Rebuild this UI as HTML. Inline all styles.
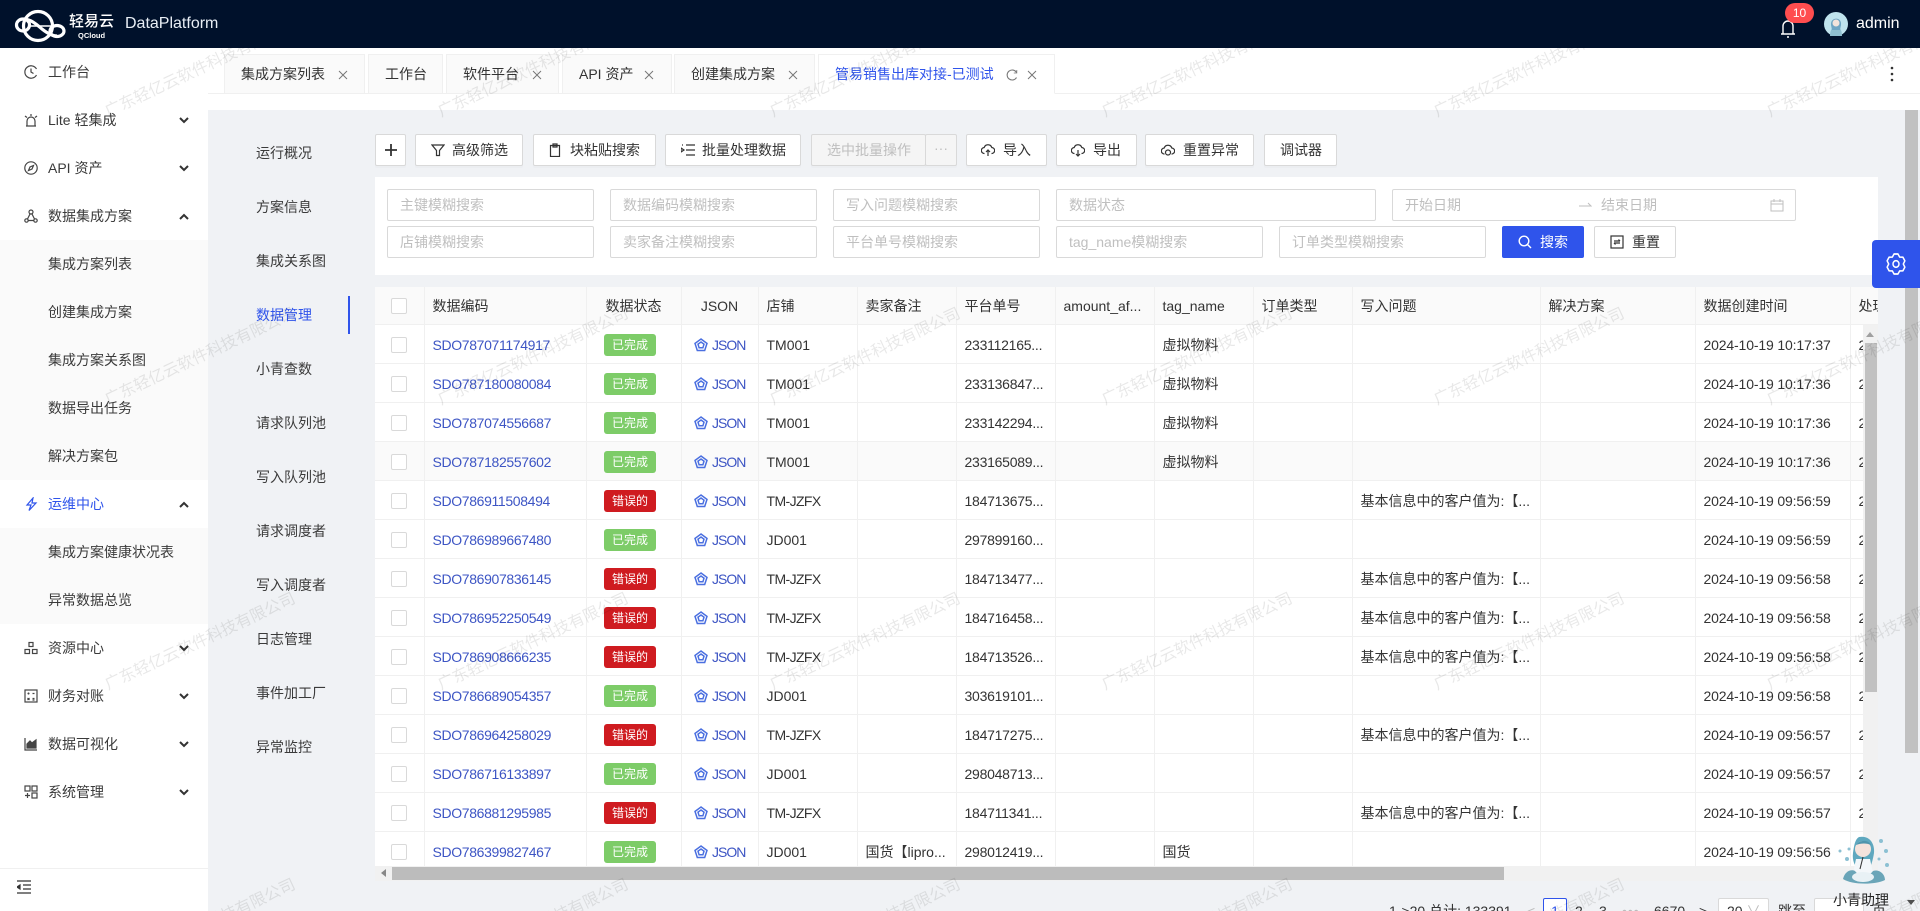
<!DOCTYPE html>
<html lang="zh-CN"><head><meta charset="utf-8"><title>DataPlatform</title>
<style>
*{box-sizing:border-box}
html,body{margin:0;padding:0;width:1920px;height:911px;overflow:hidden;background:#f0f2f5;font-family:"Liberation Sans","Noto Sans CJK SC",sans-serif;font-size:14px;color:#333}
body{position:relative}
#root{position:absolute;left:0;top:0;width:1920px;height:911px;overflow:hidden;background:#f0f2f5}
.a{position:absolute;white-space:nowrap}
#hd{position:absolute;left:0;top:0;width:1920px;height:48px;background:#00112b;z-index:5;color:#fff}
#sd{position:absolute;left:0;top:48px;width:208px;height:863px;background:#fff}
.m{position:absolute;left:48px;height:20px;line-height:20px;white-space:nowrap;color:#3a3a3a}
.sub{position:absolute;left:0;width:208px;background:#fafafa}
.ic{position:absolute;left:24px;width:14px;height:14px;fill:none;stroke:#444;stroke-width:1.2}
.ch{position:absolute;left:179px;width:10px;height:8px;fill:none;stroke:#333;stroke-width:2}
#tb{position:absolute;left:208px;top:48px;width:1712px;height:62px;background:#fff}
.tab{position:absolute;top:54px;height:40px;background:#fafafa;border:1px solid #f0f0f0;line-height:38px;padding-left:16px;white-space:nowrap}
.x{position:absolute;top:70px;width:10px;height:10px;stroke:#777;stroke-width:1;fill:none}
.n{position:absolute;left:256px;height:20px;line-height:20px;white-space:nowrap;color:#3a3a3a}
.b{position:absolute;top:134px;height:32px;background:#fff;border:1px solid #d9d9d9;border-radius:2px;line-height:30px;white-space:nowrap;box-shadow:0 2px 0 rgba(0,0,0,.015);color:#333}
.b svg,.r svg{position:absolute;top:8px;width:14px;height:14px;fill:none;stroke:#333;stroke-width:1.2}
.i{position:absolute;height:32px;background:#fff;border:1px solid #d9d9d9;border-radius:2px;line-height:30px;padding-left:12px;color:#bfbfbf;white-space:nowrap}
#tw{position:absolute;left:375px;top:287px;width:1503px;height:579px;overflow:hidden;background:#fff}
table{border-collapse:separate;border-spacing:0;table-layout:fixed;width:1675.5px}
th,td{border-right:1px solid #f0f0f0;border-bottom:1px solid #f0f0f0;padding:0 8px;white-space:nowrap;overflow:hidden;text-align:left;font-weight:400}
th{height:38px;background:#fafafa;color:#333}
td{height:39px;padding-top:1px}
.c{display:block;width:16px;height:16px;border:1px solid #d9d9d9;border-radius:2px;background:#fff;margin:0 auto}
.l{color:#3d55c4;letter-spacing:-.35px}
.t{display:inline-block;width:52px;height:22px;line-height:22px;text-align:center;color:#fff;font-size:12px;border-radius:3px;margin-left:9.5px;vertical-align:middle}
.g{background:#7dcc68}.e{background:#cf1b20}
.j{color:#3d55c4;display:inline-block;margin-left:4.5px}
.j svg{width:14px;height:14px;vertical-align:-2px;margin-right:4px}
.j span{letter-spacing:-1px}
.d{letter-spacing:-.15px}
.p{letter-spacing:-.25px}
.k{letter-spacing:-.6px}
.hv td{background:#fafafa}
#wm{position:absolute;left:0;top:48px;z-index:3;pointer-events:none;overflow:hidden}
#wm text{font-family:"Liberation Sans","Noto Sans CJK SC",sans-serif;font-size:16px;fill:rgba(0,0,0,.09)}
.pg{position:absolute;top:899px;height:12px;overflow:hidden;line-height:24px;white-space:nowrap;color:#333}
</style></head><body><div id="root">

<div id="hd">
<svg class="a" style="left:0;top:0" width="80" height="48" viewBox="0 0 80 48" fill="none" stroke="#fff" stroke-width="3.2"><circle cx="38" cy="26" r="14.500"/><ellipse cx="23" cy="25" rx="6.500" ry="6"/><ellipse cx="57" cy="31" rx="7" ry="5.500"/><path d="M24 19c8 1 12 5 18 10 5 4 10 7 15 7"/><path d="M29 26h22" stroke-width="1.400"/></svg>
<div class="a" style="left:69px;top:12px;font-size:15px;line-height:20px;font-weight:500">轻易云</div>
<div class="a" style="left:78px;top:31px;font-size:7.5px;line-height:10px;font-weight:700">QCloud</div>
<div class="a" style="left:125px;top:14px;font-size:16px;line-height:20px;color:#e8eef5">DataPlatform</div>
<svg class="a" style="left:1780px;top:16px" width="16" height="24" viewBox="0 0 16 24" fill="none" stroke="#fff" stroke-width="1.400"><path d="M3 18V10a5 5 0 0 1 10 0v8M1 18h14M7 21h2"/></svg>
<div class="a" style="left:1785px;top:3px;width:29px;height:20px;border-radius:10px;background:#ff4d4f;color:#fff;font-size:12px;line-height:20px;text-align:center">10</div>
<svg class="a" style="left:1824px;top:12px" width="24" height="24" viewBox="0 0 24 24"><circle cx="12" cy="12" r="12" fill="#bfe3ee"/><path d="M6 24c0-6 2-9 6-9s6 3 6 9z" fill="#8fbfd0"/><path d="M7 13c-1-8 11-9 10 0l-1 5H8z" fill="#6fa5c4"/><circle cx="12" cy="11" r="3.500" fill="#f3e3dc"/></svg>
<div class="a" style="left:1856px;top:14px;font-size:16px;line-height:20px;color:#fff">admin</div>
</div>

<div id="sd"></div>
<div class="sub" style="top:240px;height:240px"></div>
<div class="sub" style="top:528px;height:96px"></div>
<div class="a" style="left:0;top:868px;width:208px;height:1px;background:#f0f0f0"></div>
<div class="m" style="top:62px">工作台</div>
<div class="m" style="top:110px">Lite 轻集成</div>
<div class="m" style="top:158px">API 资产</div>
<div class="m" style="top:206px">数据集成方案</div>
<div class="m" style="top:254px">集成方案列表</div>
<div class="m" style="top:302px">创建集成方案</div>
<div class="m" style="top:350px">集成方案关系图</div>
<div class="m" style="top:398px">数据导出任务</div>
<div class="m" style="top:446px">解决方案包</div>
<div class="m" style="top:494px;color:#2f54eb">运维中心</div>
<div class="m" style="top:542px">集成方案健康状况表</div>
<div class="m" style="top:590px">异常数据总览</div>
<div class="m" style="top:638px">资源中心</div>
<div class="m" style="top:686px">财务对账</div>
<div class="m" style="top:734px">数据可视化</div>
<div class="m" style="top:782px">系统管理</div>
<svg class="ic" style="top:65px" viewBox="0 0 14 14"><path d="M12.500 4A6.200 6.200 0 1 0 12.500 10M7 3.500V7l2.500 1.500"/></svg>
<svg class="ic" style="top:113px" viewBox="0 0 14 14"><path d="M2 13h10M3 13V8a4 4 0 0 1 8 0v5M7 1v2M1 3l2 1.500M13 3l-2 1.500"/></svg>
<svg class="ic" style="top:161px" viewBox="0 0 14 14"><circle cx="7" cy="7" r="6.200"/><path d="M9.500 4.500 8 8 4.500 9.500 6 6z"/></svg>
<svg class="ic" style="top:209px" viewBox="0 0 14 14"><circle cx="7" cy="3" r="2"/><circle cx="2.500" cy="11.500" r="1.700"/><circle cx="11.500" cy="11.500" r="1.700"/><path d="M6 5 3.500 10M8 5l2.500 5M4.200 11.500h5.600"/></svg>
<svg class="ic" style="top:497px;stroke:#2f54eb" viewBox="0 0 14 14"><path d="M9 1 3 8h4l-2 5.500L12 6H8z"/></svg>
<svg class="ic" style="top:641px" viewBox="0 0 14 14"><rect x="5" y="1.500" width="4" height="4"/><rect x="1" y="8.500" width="4.500" height="4"/><rect x="8.500" y="8.500" width="4.500" height="4"/></svg>
<svg class="ic" style="top:689px" viewBox="0 0 14 14"><rect x="1" y="1" width="12" height="12"/><path d="M3.500 4.500h2M4.500 3.500v2M8.500 4.500h2M3.500 9l2 2M5.500 9l-2 2M8.500 9.500h2M8.500 11h2"/></svg>
<svg class="ic" style="top:737px" viewBox="0 0 14 14"><path d="M1 1v12h12"/><path d="M3 11V7l3-3 2 2 4-3v8z" fill="#444"/></svg>
<svg class="ic" style="top:785px" viewBox="0 0 14 14"><rect x="1" y="1" width="5" height="5"/><rect x="8" y="1" width="5" height="5"/><rect x="8" y="8" width="5" height="5"/><path d="M1 10.500h5M3.500 8v5"/></svg>
<svg class="ch" style="top:116px" viewBox="0 0 10 8"><path d="M1 2l4 4 4-4"/></svg>
<svg class="ch" style="top:164px" viewBox="0 0 10 8"><path d="M1 2l4 4 4-4"/></svg>
<svg class="ch" style="top:213px" viewBox="0 0 10 8"><path d="M1 6l4-4 4 4"/></svg>
<svg class="ch" style="top:501px" viewBox="0 0 10 8"><path d="M1 6l4-4 4 4"/></svg>
<svg class="ch" style="top:644px" viewBox="0 0 10 8"><path d="M1 2l4 4 4-4"/></svg>
<svg class="ch" style="top:692px" viewBox="0 0 10 8"><path d="M1 2l4 4 4-4"/></svg>
<svg class="ch" style="top:740px" viewBox="0 0 10 8"><path d="M1 2l4 4 4-4"/></svg>
<svg class="ch" style="top:788px" viewBox="0 0 10 8"><path d="M1 2l4 4 4-4"/></svg>
<svg class="a" style="left:17px;top:880px" width="14" height="14" viewBox="0 0 14 14" fill="none" stroke="#333" stroke-width="1.200"><path d="M0 1h14M6 5h8M6 9h8M0 13h14"/><path d="M0 7l3-2v4z" fill="#333"/></svg>

<div id="tb"></div>
<div class="a" style="left:208px;top:93px;width:1712px;height:1px;background:#f0f0f0"></div>
<div class="tab" style="left:224px;width:141px">集成方案列表</div>
<div class="tab" style="left:368px;width:75px">工作台</div>
<div class="tab" style="left:446px;width:113px">软件平台</div>
<div class="tab" style="left:562px;width:110px">API 资产</div>
<div class="tab" style="left:674px;width:141px">创建集成方案</div>
<div class="tab" style="left:818px;width:237px;background:#fff;border-bottom-color:#fff;color:#2f54eb">管易销售出库对接-已测试</div>
<svg class="x" style="left:338px" viewBox="0 0 10 10"><path d="M1 1l8 8M9 1l-8 8"/></svg>
<svg class="x" style="left:532px" viewBox="0 0 10 10"><path d="M1 1l8 8M9 1l-8 8"/></svg>
<svg class="x" style="left:644px" viewBox="0 0 10 10"><path d="M1 1l8 8M9 1l-8 8"/></svg>
<svg class="x" style="left:788px" viewBox="0 0 10 10"><path d="M1 1l8 8M9 1l-8 8"/></svg>
<svg class="x" style="left:1027px" viewBox="0 0 10 10"><path d="M1 1l8 8M9 1l-8 8"/></svg>
<svg class="a" style="left:1006px;top:69px" width="12" height="12" viewBox="0 0 12 12" fill="none" stroke="#777" stroke-width="1.100"><path d="M10.500 3.500A5 5 0 1 0 10.500 8.500"/><path d="M10.800 1v3h-3" stroke-width=".8"/></svg>
<svg class="a" style="left:1890px;top:66px" width="4" height="16" viewBox="0 0 4 16" fill="#333"><circle cx="2" cy="2" r="1.300"/><circle cx="2" cy="8" r="1.300"/><circle cx="2" cy="14" r="1.300"/></svg>

<div class="n" style="top:143px">运行概况</div>
<div class="n" style="top:197px">方案信息</div>
<div class="n" style="top:251px">集成关系图</div>
<div class="n" style="top:305px;color:#2f54eb">数据管理</div>
<div class="n" style="top:359px">小青查数</div>
<div class="n" style="top:413px">请求队列池</div>
<div class="n" style="top:467px">写入队列池</div>
<div class="n" style="top:521px">请求调度者</div>
<div class="n" style="top:575px">写入调度者</div>
<div class="n" style="top:629px">日志管理</div>
<div class="n" style="top:683px">事件加工厂</div>
<div class="n" style="top:737px">异常监控</div>
<div class="a" style="left:348px;top:296px;width:2px;height:38px;background:#2f54eb"></div>

<div class="b" style="left:375px;width:31px"><svg style="left:8px;top:8px;stroke-width:1.800" viewBox="0 0 14 14"><path d="M7 1v12M1 7h12"/></svg></div>
<div class="b" style="left:415px;width:108px;padding-left:36px"><svg style="left:15px" viewBox="0 0 14 14"><path d="M1 2h12L8.500 7.500V12.500H5.500V7.500z"/></svg>高级筛选</div>
<div class="b" style="left:533px;width:123px;padding-left:36px"><svg style="left:14px" viewBox="0 0 14 14"><path d="M2.500 2.500h9v11h-9zM5 1h4v3H5z"/></svg>块粘贴搜索</div>
<div class="b" style="left:665px;width:136px;padding-left:36px"><svg style="left:15px" viewBox="0 0 14 14"><path d="M5 2h9M5 7h9M5 12h9M1 2h1M0 5l3 2-3 2z"/></svg>批量处理数据</div>
<div class="b" style="left:811px;width:115px;padding-left:15px;background:#f5f5f5;color:#bfbfbf">选中批量操作</div>
<div class="b" style="left:925px;width:32px;background:#f5f5f5;color:#bfbfbf;text-align:center;line-height:26px">···</div>
<div class="b" style="left:966px;width:81px;padding-left:36px"><svg style="left:14px" viewBox="0 0 14 14"><path d="M3.500 10.500a3 3 0 0 1-.3-6 4 4 0 0 1 7.600 0 3 3 0 0 1-.3 6M7 13V7M5 9l2-2 2 2"/></svg>导入</div>
<div class="b" style="left:1056px;width:81px;padding-left:36px"><svg style="left:14px" viewBox="0 0 14 14"><path d="M3.500 10.500a3 3 0 0 1-.3-6 4 4 0 0 1 7.600 0 3 3 0 0 1-.3 6M7 13V7M5 11l2 2 2-2"/></svg>导出</div>
<div class="b" style="left:1145px;width:109px;padding-left:37px"><svg style="left:15px" viewBox="0 0 14 14"><path d="M3.500 11a3 3 0 0 1-.3-6 4 4 0 0 1 7.600 0 3 3 0 0 1-.3 6"/><circle cx="7" cy="9.500" r="2.500"/></svg>重置异常</div>
<div class="b" style="left:1264px;width:73px;padding-left:15px">调试器</div>

<div class="a" style="left:375px;top:177px;width:1503px;height:98px;background:#fff"></div>
<div class="i" style="left:387px;top:189px;width:207px">主键模糊搜索</div>
<div class="i" style="left:610px;top:189px;width:207px">数据编码模糊搜索</div>
<div class="i" style="left:833px;top:189px;width:207px">写入问题模糊搜索</div>
<div class="i" style="left:1056px;top:189px;width:320px">数据状态</div>
<div class="i" style="left:1392px;top:189px;width:404px">开始日期</div>
<svg class="a" style="left:1578px;top:200px" width="14" height="10" viewBox="0 0 14 10" fill="none" stroke="#bfbfbf"><path d="M1 6h12l-3-3"/></svg>
<div class="a" style="left:1601px;top:195px;line-height:20px;color:#bfbfbf">结束日期</div>
<svg class="a" style="left:1770px;top:198px" width="14" height="14" viewBox="0 0 14 14" fill="none" stroke="#bfbfbf"><path d="M1 3h12v10H1zM1 6h12M4 1v3M10 1v3"/></svg>
<div class="i" style="left:387px;top:226px;width:207px">店铺模糊搜索</div>
<div class="i" style="left:610px;top:226px;width:207px">卖家备注模糊搜索</div>
<div class="i" style="left:833px;top:226px;width:207px">平台单号模糊搜索</div>
<div class="i" style="left:1056px;top:226px;width:207px">tag_name模糊搜索</div>
<div class="i" style="left:1279px;top:226px;width:207px">订单类型模糊搜索</div>
<div class="a r" style="left:1502px;top:226px;width:82px;height:32px;background:#2f54eb;border-radius:2px;color:#fff;line-height:32px;padding-left:38px"><svg style="left:16px;top:9px;stroke:#fff;stroke-width:1.400" viewBox="0 0 14 14"><circle cx="6" cy="6" r="4.800"/><path d="M9.500 9.500 13 13"/></svg>搜索</div>
<div class="a r" style="left:1594px;top:226px;width:82px;height:32px;background:#fff;border:1px solid #d9d9d9;border-radius:2px;line-height:30px;padding-left:37px"><svg style="left:15px;top:8px" viewBox="0 0 14 14"><rect x="1" y="1" width="12" height="12"/><path d="M4 6h6M10 8H4M8.500 4.500 10 6M5.500 9.500 4 8"/></svg>重置</div>

<div id="tw"><table>
<colgroup><col style="width:49.5px"><col style="width:162px"><col style="width:95px"><col style="width:77px"><col style="width:99px"><col style="width:99px"><col style="width:99px"><col style="width:99px"><col style="width:99px"><col style="width:99px"><col style="width:188px"><col style="width:155px"><col style="width:155px"><col style="width:200px"></colgroup>
<tr><th><span class="c"></span></th><th>数据编码</th><th style="text-align:center">数据状态</th><th style="text-align:center">JSON</th><th>店铺</th><th>卖家备注</th><th>平台单号</th><th>amount_af...</th><th>tag_name</th><th>订单类型</th><th>写入问题</th><th>解决方案</th><th>数据创建时间</th><th>处理时间</th></tr>
<tr><td><span class="c"></span></td><td class="l">SDO787071174917</td><td><span class="t g">已完成</span></td><td><span class="j"><svg viewBox="0 0 14 14" fill="none" stroke="#4a6fe0" stroke-width="1.500"><path d="M7 1l6 4.400-2.300 7.100H3.300L1 5.400z"/><path d="M7 4l3 2.200-1.100 3.600H5.100L4 6.200z"/></svg><span>JSON</span></span></td><td>TM001</td><td></td><td class="p">233112165...</td><td></td><td>虚拟物料</td><td></td><td></td><td></td><td class="d">2024-10-19 10:17:37</td><td class="d">2024-10-19 10:17:38</td></tr>
<tr><td><span class="c"></span></td><td class="l">SDO787180080084</td><td><span class="t g">已完成</span></td><td><span class="j"><svg viewBox="0 0 14 14" fill="none" stroke="#4a6fe0" stroke-width="1.500"><path d="M7 1l6 4.400-2.300 7.100H3.300L1 5.400z"/><path d="M7 4l3 2.200-1.100 3.600H5.100L4 6.200z"/></svg><span>JSON</span></span></td><td>TM001</td><td></td><td class="p">233136847...</td><td></td><td>虚拟物料</td><td></td><td></td><td></td><td class="d">2024-10-19 10:17:36</td><td class="d">2024-10-19 10:17:38</td></tr>
<tr><td><span class="c"></span></td><td class="l">SDO787074556687</td><td><span class="t g">已完成</span></td><td><span class="j"><svg viewBox="0 0 14 14" fill="none" stroke="#4a6fe0" stroke-width="1.500"><path d="M7 1l6 4.400-2.300 7.100H3.300L1 5.400z"/><path d="M7 4l3 2.200-1.100 3.600H5.100L4 6.200z"/></svg><span>JSON</span></span></td><td>TM001</td><td></td><td class="p">233142294...</td><td></td><td>虚拟物料</td><td></td><td></td><td></td><td class="d">2024-10-19 10:17:36</td><td class="d">2024-10-19 10:17:38</td></tr>
<tr class="hv"><td><span class="c"></span></td><td class="l">SDO787182557602</td><td><span class="t g">已完成</span></td><td><span class="j"><svg viewBox="0 0 14 14" fill="none" stroke="#4a6fe0" stroke-width="1.500"><path d="M7 1l6 4.400-2.300 7.100H3.300L1 5.400z"/><path d="M7 4l3 2.200-1.100 3.600H5.100L4 6.200z"/></svg><span>JSON</span></span></td><td>TM001</td><td></td><td class="p">233165089...</td><td></td><td>虚拟物料</td><td></td><td></td><td></td><td class="d">2024-10-19 10:17:36</td><td class="d">2024-10-19 10:17:38</td></tr>
<tr><td><span class="c"></span></td><td class="l">SDO786911508494</td><td><span class="t e">错误的</span></td><td><span class="j"><svg viewBox="0 0 14 14" fill="none" stroke="#4a6fe0" stroke-width="1.500"><path d="M7 1l6 4.400-2.300 7.100H3.300L1 5.400z"/><path d="M7 4l3 2.200-1.100 3.600H5.100L4 6.200z"/></svg><span>JSON</span></span></td><td class="k">TM-JZFX</td><td></td><td class="p">184713675...</td><td></td><td></td><td></td><td>基本信息中的客户值为:【...</td><td></td><td class="d">2024-10-19 09:56:59</td><td class="d">2024-10-19 09:57:00</td></tr>
<tr><td><span class="c"></span></td><td class="l">SDO786989667480</td><td><span class="t g">已完成</span></td><td><span class="j"><svg viewBox="0 0 14 14" fill="none" stroke="#4a6fe0" stroke-width="1.500"><path d="M7 1l6 4.400-2.300 7.100H3.300L1 5.400z"/><path d="M7 4l3 2.200-1.100 3.600H5.100L4 6.200z"/></svg><span>JSON</span></span></td><td>JD001</td><td></td><td class="p">297899160...</td><td></td><td></td><td></td><td></td><td></td><td class="d">2024-10-19 09:56:59</td><td class="d">2024-10-19 09:57:00</td></tr>
<tr><td><span class="c"></span></td><td class="l">SDO786907836145</td><td><span class="t e">错误的</span></td><td><span class="j"><svg viewBox="0 0 14 14" fill="none" stroke="#4a6fe0" stroke-width="1.500"><path d="M7 1l6 4.400-2.300 7.100H3.300L1 5.400z"/><path d="M7 4l3 2.200-1.100 3.600H5.100L4 6.200z"/></svg><span>JSON</span></span></td><td class="k">TM-JZFX</td><td></td><td class="p">184713477...</td><td></td><td></td><td></td><td>基本信息中的客户值为:【...</td><td></td><td class="d">2024-10-19 09:56:58</td><td class="d">2024-10-19 09:57:00</td></tr>
<tr><td><span class="c"></span></td><td class="l">SDO786952250549</td><td><span class="t e">错误的</span></td><td><span class="j"><svg viewBox="0 0 14 14" fill="none" stroke="#4a6fe0" stroke-width="1.500"><path d="M7 1l6 4.400-2.300 7.100H3.300L1 5.400z"/><path d="M7 4l3 2.200-1.100 3.600H5.100L4 6.200z"/></svg><span>JSON</span></span></td><td class="k">TM-JZFX</td><td></td><td class="p">184716458...</td><td></td><td></td><td></td><td>基本信息中的客户值为:【...</td><td></td><td class="d">2024-10-19 09:56:58</td><td class="d">2024-10-19 09:57:00</td></tr>
<tr><td><span class="c"></span></td><td class="l">SDO786908666235</td><td><span class="t e">错误的</span></td><td><span class="j"><svg viewBox="0 0 14 14" fill="none" stroke="#4a6fe0" stroke-width="1.500"><path d="M7 1l6 4.400-2.300 7.100H3.300L1 5.400z"/><path d="M7 4l3 2.200-1.100 3.600H5.100L4 6.200z"/></svg><span>JSON</span></span></td><td class="k">TM-JZFX</td><td></td><td class="p">184713526...</td><td></td><td></td><td></td><td>基本信息中的客户值为:【...</td><td></td><td class="d">2024-10-19 09:56:58</td><td class="d">2024-10-19 09:57:00</td></tr>
<tr><td><span class="c"></span></td><td class="l">SDO786689054357</td><td><span class="t g">已完成</span></td><td><span class="j"><svg viewBox="0 0 14 14" fill="none" stroke="#4a6fe0" stroke-width="1.500"><path d="M7 1l6 4.400-2.300 7.100H3.300L1 5.400z"/><path d="M7 4l3 2.200-1.100 3.600H5.100L4 6.200z"/></svg><span>JSON</span></span></td><td>JD001</td><td></td><td class="p">303619101...</td><td></td><td></td><td></td><td></td><td></td><td class="d">2024-10-19 09:56:58</td><td class="d">2024-10-19 09:57:00</td></tr>
<tr><td><span class="c"></span></td><td class="l">SDO786964258029</td><td><span class="t e">错误的</span></td><td><span class="j"><svg viewBox="0 0 14 14" fill="none" stroke="#4a6fe0" stroke-width="1.500"><path d="M7 1l6 4.400-2.300 7.100H3.300L1 5.400z"/><path d="M7 4l3 2.200-1.100 3.600H5.100L4 6.200z"/></svg><span>JSON</span></span></td><td class="k">TM-JZFX</td><td></td><td class="p">184717275...</td><td></td><td></td><td></td><td>基本信息中的客户值为:【...</td><td></td><td class="d">2024-10-19 09:56:57</td><td class="d">2024-10-19 09:57:00</td></tr>
<tr><td><span class="c"></span></td><td class="l">SDO786716133897</td><td><span class="t g">已完成</span></td><td><span class="j"><svg viewBox="0 0 14 14" fill="none" stroke="#4a6fe0" stroke-width="1.500"><path d="M7 1l6 4.400-2.300 7.100H3.300L1 5.400z"/><path d="M7 4l3 2.200-1.100 3.600H5.100L4 6.200z"/></svg><span>JSON</span></span></td><td>JD001</td><td></td><td class="p">298048713...</td><td></td><td></td><td></td><td></td><td></td><td class="d">2024-10-19 09:56:57</td><td class="d">2024-10-19 09:57:00</td></tr>
<tr><td><span class="c"></span></td><td class="l">SDO786881295985</td><td><span class="t e">错误的</span></td><td><span class="j"><svg viewBox="0 0 14 14" fill="none" stroke="#4a6fe0" stroke-width="1.500"><path d="M7 1l6 4.400-2.300 7.100H3.300L1 5.400z"/><path d="M7 4l3 2.200-1.100 3.600H5.100L4 6.200z"/></svg><span>JSON</span></span></td><td class="k">TM-JZFX</td><td></td><td class="p">184711341...</td><td></td><td></td><td></td><td>基本信息中的客户值为:【...</td><td></td><td class="d">2024-10-19 09:56:57</td><td class="d">2024-10-19 09:57:00</td></tr>
<tr><td><span class="c"></span></td><td class="l">SDO786399827467</td><td><span class="t g">已完成</span></td><td><span class="j"><svg viewBox="0 0 14 14" fill="none" stroke="#4a6fe0" stroke-width="1.500"><path d="M7 1l6 4.400-2.300 7.100H3.300L1 5.400z"/><path d="M7 4l3 2.200-1.100 3.600H5.100L4 6.200z"/></svg><span>JSON</span></span></td><td>JD001</td><td>国货【lipro...</td><td class="p">298012419...</td><td></td><td>国货</td><td></td><td></td><td></td><td class="d">2024-10-19 09:56:56</td><td class="d">2024-10-19 09:57:00</td></tr>
</table></div>

<!-- table scrollbars -->
<div class="a" style="left:1863px;top:325px;width:15px;height:541px;background:#f1f1f1"></div>
<div class="a" style="left:1865px;top:343px;width:12px;height:349px;background:#c1c1c1"></div>
<div class="a" style="left:1866px;top:332px;width:0;height:0;border-left:4px solid transparent;border-right:4px solid transparent;border-bottom:5px solid #a0a0a0"></div>
<div class="a" style="left:375px;top:866px;width:1503px;height:15px;background:#f1f1f1"></div>
<div class="a" style="left:392px;top:867px;width:1112px;height:13px;background:#bcbcbc"></div>
<div class="a" style="left:381px;top:869px;width:0;height:0;border-top:4px solid transparent;border-bottom:4px solid transparent;border-right:5px solid #888"></div>
<!-- page scrollbar -->
<div class="a" style="left:1905px;top:110px;width:13px;height:643px;background:#c1c1c1"></div>
<div class="a" style="left:1907px;top:900px;width:0;height:0;border-left:4px solid transparent;border-right:4px solid transparent;border-top:5px solid #505050"></div>

<!-- pagination -->
<div class="pg" style="left:1389px">1-&gt;20 总计: 133391</div>
<div class="pg" style="left:1527px;color:#bbb">&lt;</div>
<div class="a" style="left:1543px;top:898px;width:24px;height:13px;overflow:hidden;border:1px solid #2f54eb;border-bottom:0;border-radius:2px 2px 0 0;background:#fff;color:#2f54eb;text-align:center;line-height:24px">1</div>
<div class="pg" style="left:1575px">2</div>
<div class="pg" style="left:1599px">3</div>
<div class="pg" style="left:1622px;color:#bbb;letter-spacing:1px">•••</div>
<div class="pg" style="left:1654px">6670</div>
<div class="pg" style="left:1699px">&gt;</div>
<div class="a" style="left:1718px;top:898px;width:51px;height:13px;overflow:hidden;border:1px solid #d9d9d9;border-bottom:0;border-radius:2px 2px 0 0;background:#fff;line-height:24px;padding-left:8px">20 <span style="color:#bbb">∨</span></div>
<div class="pg" style="left:1778px">跳至</div>
<div class="a" style="left:1814px;top:898px;width:50px;height:13px;border:1px solid #d9d9d9;border-bottom:0;border-radius:2px 2px 0 0;background:#fff"></div>
<div class="pg" style="left:1872px">页</div>

<!-- watermark -->
<svg id="wm" width="1920" height="863" viewBox="0 0 1920 863">
<text x="108" y="69" transform="rotate(-25 108 69)">广东轻亿云软件科技有限公司</text><text x="441" y="69" transform="rotate(-25 441 69)">广东轻亿云软件科技有限公司</text><text x="773" y="69" transform="rotate(-25 773 69)">广东轻亿云软件科技有限公司</text><text x="1105" y="69" transform="rotate(-25 1105 69)">广东轻亿云软件科技有限公司</text><text x="1437" y="69" transform="rotate(-25 1437 69)">广东轻亿云软件科技有限公司</text><text x="1770" y="69" transform="rotate(-25 1770 69)">广东轻亿云软件科技有限公司</text>
<text x="108" y="357" transform="rotate(-25 108 357)">广东轻亿云软件科技有限公司</text><text x="441" y="357" transform="rotate(-25 441 357)">广东轻亿云软件科技有限公司</text><text x="773" y="357" transform="rotate(-25 773 357)">广东轻亿云软件科技有限公司</text><text x="1105" y="357" transform="rotate(-25 1105 357)">广东轻亿云软件科技有限公司</text><text x="1437" y="357" transform="rotate(-25 1437 357)">广东轻亿云软件科技有限公司</text><text x="1770" y="357" transform="rotate(-25 1770 357)">广东轻亿云软件科技有限公司</text>
<text x="108" y="642" transform="rotate(-25 108 642)">广东轻亿云软件科技有限公司</text><text x="441" y="642" transform="rotate(-25 441 642)">广东轻亿云软件科技有限公司</text><text x="773" y="642" transform="rotate(-25 773 642)">广东轻亿云软件科技有限公司</text><text x="1105" y="642" transform="rotate(-25 1105 642)">广东轻亿云软件科技有限公司</text><text x="1437" y="642" transform="rotate(-25 1437 642)">广东轻亿云软件科技有限公司</text><text x="1770" y="642" transform="rotate(-25 1770 642)">广东轻亿云软件科技有限公司</text>
<text x="108" y="928" transform="rotate(-25 108 928)">广东轻亿云软件科技有限公司</text><text x="441" y="928" transform="rotate(-25 441 928)">广东轻亿云软件科技有限公司</text><text x="773" y="928" transform="rotate(-25 773 928)">广东轻亿云软件科技有限公司</text><text x="1105" y="928" transform="rotate(-25 1105 928)">广东轻亿云软件科技有限公司</text><text x="1437" y="928" transform="rotate(-25 1437 928)">广东轻亿云软件科技有限公司</text><text x="1770" y="928" transform="rotate(-25 1770 928)">广东轻亿云软件科技有限公司</text>
</svg>

<!-- settings float -->
<div class="a" style="left:1872px;top:240px;width:48px;height:48px;background:#2f54eb;border-radius:4px 0 0 4px;z-index:4"></div>
<svg class="a" style="left:1886px;top:253px;z-index:4" width="20" height="22" viewBox="0 0 20 20" preserveAspectRatio="none" fill="none" stroke="#fff" stroke-width="1.500" stroke-linejoin="round"><path d="M8.070.9h3.860l1.720 2.780 3.260.1 1.930 3.350L17.300 10l1.540 2.870-1.930 3.350-3.260.1-1.720 2.780H8.070l-1.720-2.780-3.260-.1-1.930-3.350L2.700 10 1.160 7.130l1.930-3.350 3.260-.1z"/><circle cx="10" cy="10" r="3"/></svg>

<!-- helper -->
<svg class="a" style="left:1837px;top:835px;z-index:4" width="54" height="50" viewBox="0 0 54 50"><g fill="#8cc0d3"><circle cx="3" cy="16" r="1.500"/><circle cx="12" cy="14" r="1.500"/><circle cx="10" cy="24" r="2"/><circle cx="44" cy="6" r="2"/><circle cx="49" cy="16" r="2"/><circle cx="50" cy="30" r="2"/><circle cx="42" cy="24" r="1.500"/></g><path d="M22 2c10-2 16 6 15 16-1 7-3 12-4 16H20c-2-4-5-8-4-16 1-7 2-14 6-16z" fill="#5fa8bf"/><ellipse cx="26" cy="14" rx="8" ry="8" fill="#f5e3dc"/><path d="M19 10c3-5 12-6 15 0-4-2-10-2-15 0z" fill="#4f95ad"/><path d="M19 24h14l3 14H16z" fill="#f3f7fa"/><path d="M26 22l-3 12" stroke="#333" stroke-width="1"/><path d="M6 44c2-8 8-10 12-8 4 6 14 6 18 0 5-2 12 2 12 9-10 5-33 5-42-1z" fill="#6aa5b8"/><ellipse cx="26" cy="42" rx="11" ry="5" fill="#e8f1f5"/></svg>
<div class="a" style="left:1833px;top:890px;line-height:20px;color:#222;z-index:4">小青助理</div>
</div></body></html>
